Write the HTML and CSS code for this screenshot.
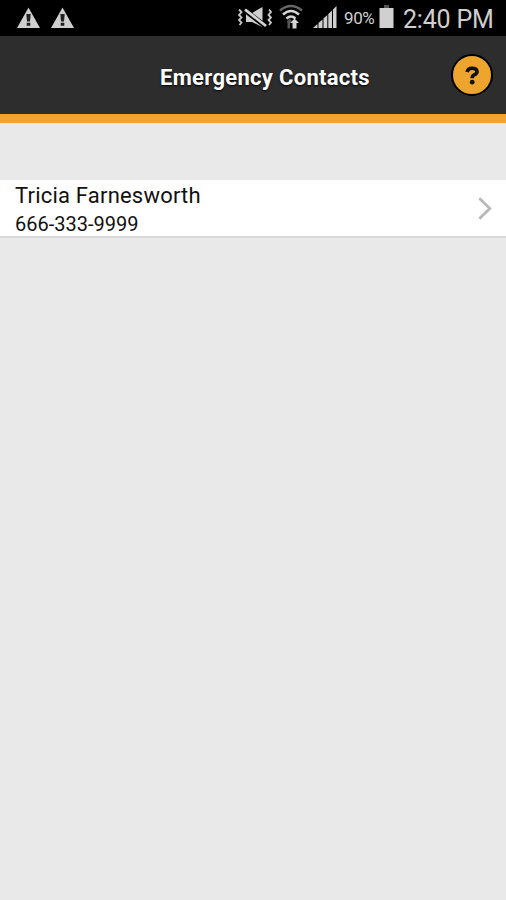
FILE: index.html
```html
<!DOCTYPE html>
<html lang="en">
<head>
  <meta charset="UTF-8" />
  <meta name="viewport" content="width=device-width, initial-scale=1.0" />
  <title>Emergency Contacts</title>
  <link rel="stylesheet" href="styles.css">
</head>
<body>
  <div class="status-bar">
    <svg class="warning" width="23" height="21" viewBox="0 0 23 21">
      <path d="M11.5 0.5 L23 21 H0 Z" fill="#cfcfcf" />
      <path d="M9.3 7 H13.7 L13 14.5 H10 Z M9.7 15.8 H13.3 V18.8 H9.7 Z" fill="#222" />
    </svg>
    <svg class="warning" width="23" height="21" viewBox="0 0 23 21">
      <path d="M11.5 0.5 L23 21 H0 Z" fill="#cfcfcf" />
      <path d="M9.3 7 H13.7 L13 14.5 H10 Z M9.7 15.8 H13.3 V18.8 H9.7 Z" fill="#222" />
    </svg>

    <svg class="mute" width="34" height="22" viewBox="0 0 34 22">
      <path d="M8 6 H14 L24.5 0 V20 L14 15 H8 Z" fill="#cfcfcf" />
      <path d="M6.5 3 L28 19.5" stroke="#000" stroke-width="5" />
      <path d="M7 2.5 L28 19" stroke="#d4d4d4" stroke-width="2.8" />
      <path d="M1 2.5 L3.5 5 L1 8 L3.5 10.5 L1 13 L3.5 15.5 L1.5 18 M31 2.5 L33 5 L30.5 8 L33 10.5 L30.5 13 L33 15.5 L31 18" fill="none" stroke="#c8c8c8" stroke-width="1.8" />
    </svg>

    <svg class="wifi" width="24" height="26" viewBox="0 0 24 26">
      <g fill="none" stroke-width="2.5">
        <path d="M1 6.5 Q12 -2.5 23 6.5" stroke="#666" />
        <path d="M4 10.5 Q12 3.5 20 10.5" stroke="#d5d5d5" />
        <path d="M7.5 14.5 Q12 10.5 16.5 14.5" stroke="#d5d5d5" />
      </g>
      <path d="M8 17 L11 14.5 L12.5 16.5 L11 19 V24.5 H8.5 V19.5 Z" fill="#555" />
      <path d="M15.5 14.5 L20 19 H17.5 V24.5 H13.5 V19 H11 Z" fill="#d5d5d5" />
    </svg>

    <svg class="signal" width="25" height="24" viewBox="0 0 25 24">
      <path d="M0 23 L4.5 19 V23 Z M5.5 18 L9.5 14.5 V23 H5.5 Z M10.5 13.5 L14.3 10 V23 H10.5 Z M15.3 9 L19 5.5 V23 H15.3 Z M20 4.5 L23.5 1 V23 H20 Z" fill="#cfcfcf" />
    </svg>

    <span class="percent">90%</span>

    <svg class="battery" width="15" height="23" viewBox="0 0 15 23">
      <path d="M5 0 H10 V3 H5 Z" fill="#555" />
      <path d="M0.5 3 H14.5 V23 H0.5 Z" fill="#d0d0d0" />
    </svg>

    <span class="clock">2:40 PM</span>
  </div>

  <header>
    <h1>Emergency Contacts</h1>
    <button class="help" type="button" aria-label="Help">
      <svg width="15" height="19" viewBox="0 0 15 19">
        <path d="M2 6 Q3 2.2 7 2.2 Q12 2.2 12 5.7 Q12 7.5 9.5 8.7 Q7.2 9.8 7.2 12.2" fill="none" stroke="#111" stroke-width="3.6" />
        <circle cx="7.2" cy="16.2" r="2.4" fill="#111" />
      </svg>
    </button>
  </header>

  <main>
    <a class="contact">
      <div>
        <div class="name">Tricia Farnesworth</div>
        <div class="phone">666-333-9999</div>
      </div>
      <svg width="14" height="23" viewBox="0 0 14 23">
        <path d="M1.3 1.3 L11.8 11.5 L1.3 21.7" fill="none" stroke="#b8b8b8" stroke-width="2.8" />
      </svg>
    </a>
  </main>
</body>
</html>
```

FILE: styles.css
```css
* {
  box-sizing: border-box;
}

body {
  margin: 0;
  min-height: 100vh;
  background-color: #e9e9e9;
  color: #111;
  font-family: Roboto, sans-serif;
}

.status-bar {
  display: flex;
  align-items: flex-start;
  height: 36px;
  padding: 7px 0 0 17px;
  background: #000;
  color: #cfcfcf;
}

.status-bar svg {
  flex: none;
}

.warning {
  margin-right: 11px;
}

.mute {
  margin-left: 153px;
}

.wifi {
  margin: -3px 0 0 7px;
}

.signal {
  margin: -2px 0 0 10px;
}

.percent {
  width: 32px;
  margin-left: 6px;
  font-size: 17px;
  line-height: 23px;
  letter-spacing: -0.4px;
}

.battery {
  margin: -2px 0 0 3px;
}

.clock {
  margin-left: 9px;
  font-size: 25px;
  line-height: 25px;
  letter-spacing: -0.2px;
  white-space: nowrap;
}

header {
  display: flex;
  align-items: center;
  height: 87px;
  padding: 0 13px 0 79px;
  background: #2d2d2d;
  border-bottom: 9px solid #eea52e;
}

h1 {
  flex: 1;
  margin: 5px 0 0;
  font-size: 22px;
  line-height: 28px;
  letter-spacing: 0.3px;
  text-align: center;
  color: #fff;
  text-shadow: 0 1px 2px #000;
}

.help {
  display: flex;
  align-items: center;
  justify-content: center;
  width: 42px;
  height: 42px;
  padding: 0;
  border: 2px solid #000;
  border-radius: 50%;
  background: #eea52e;
}

main {
  padding-top: 57px;
}

.contact {
  display: flex;
  align-items: center;
  justify-content: space-between;
  height: 58px;
  padding: 0 14px 0 15px;
  background: #fff;
  border-bottom: 2px solid #d8d8d8;
}

.name {
  padding-top: 2px;
  font-size: 22px;
  line-height: 30px;
  letter-spacing: 0.2px;
}

.phone {
  font-size: 20px;
  line-height: 27px;
}
```
